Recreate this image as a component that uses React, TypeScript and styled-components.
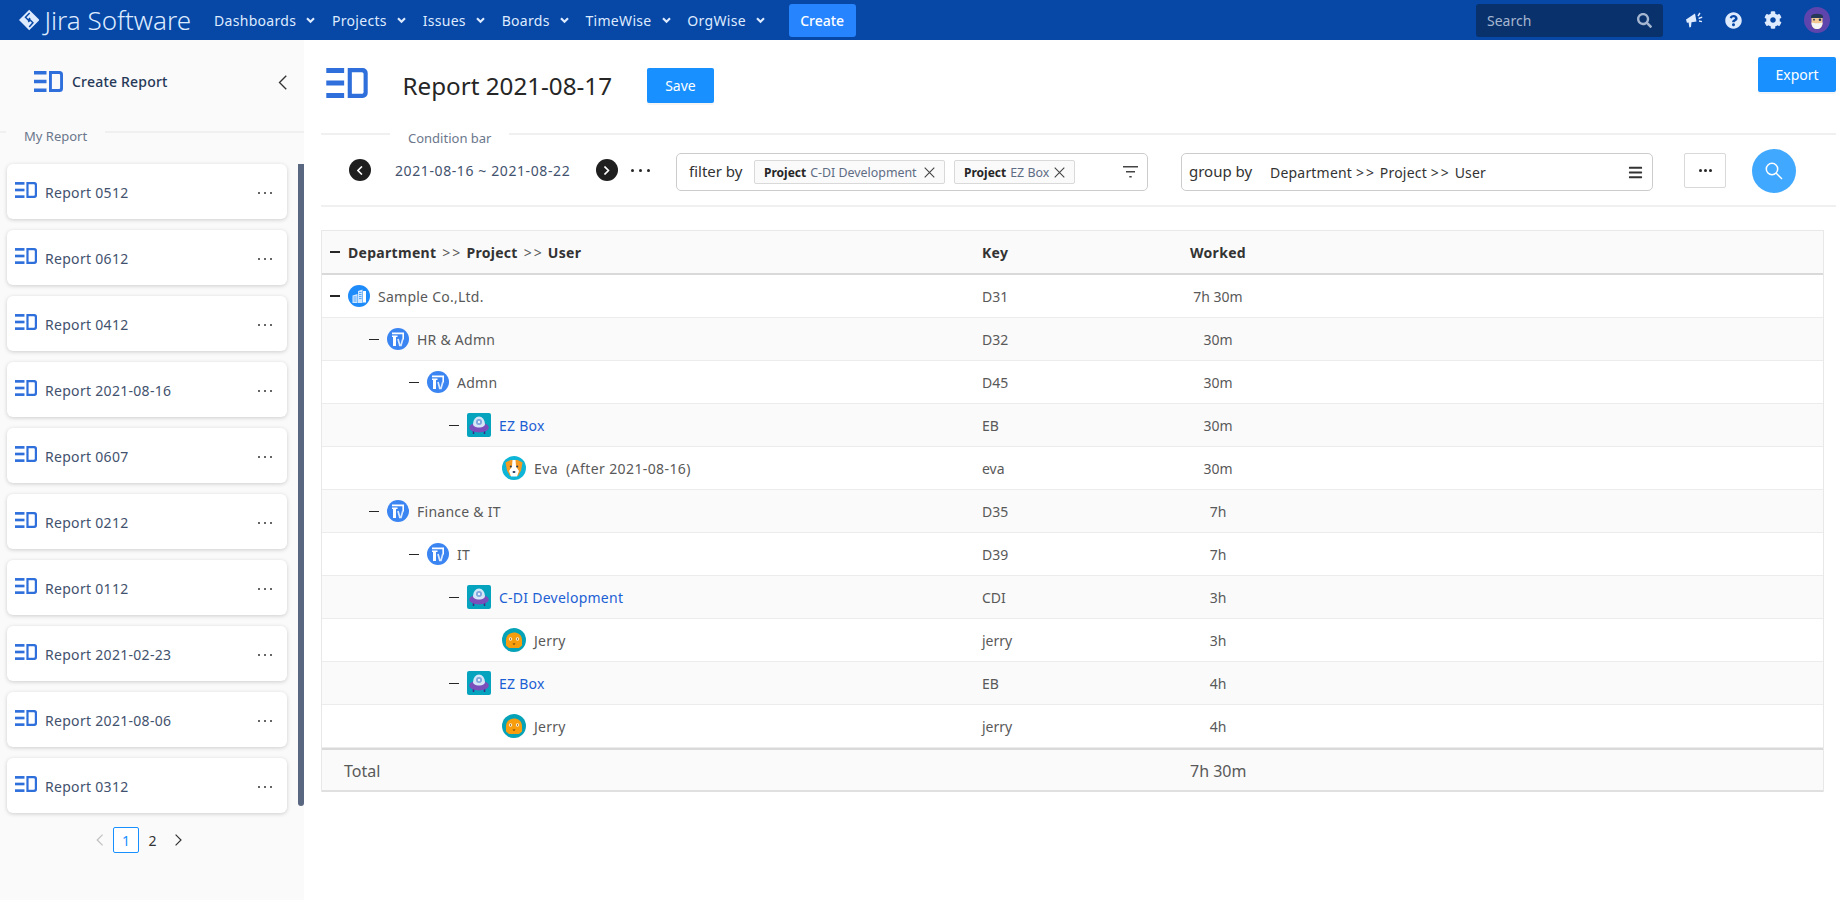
import React from 'react'
import styled, { createGlobalStyle } from 'styled-components'
import { FaBars, FaCog, FaQuestionCircle, FaSearch } from 'react-icons/fa'

const GlobalStyle = createGlobalStyle`
  html, body {
    margin: 0;
    padding: 0;
    background: #fff;
    font-family: "Noto Sans", "Open Sans", sans-serif;
    font-size: 14px;
    color: #595959;
  }
`

const NavBar = styled.header`
  height: 40px;
  background: #0747a6;
  color: #deebff;
  display: flex;
  align-items: center;
  padding-left: 19px;
`

const Brand = styled.div`
  display: flex;
  align-items: center;
  gap: 5px;
  width: 172px;
  margin-right: 23px;
  font-size: 26px;
  font-weight: 300;
  color: #deebff;
  white-space: nowrap;
`

const NavItem = styled.div`
  display: flex;
  align-items: center;
  gap: 10px;
  margin-right: 16.8px;
  letter-spacing: 0.3px;
`

const CreateBtn = styled.button`
  width: 67px;
  height: 33px;
  margin-left: 7px;
  border: 0;
  border-radius: 3px;
  background: #2684ff;
  color: #fff;
  font: 500 14px "Noto Sans", sans-serif;
`

const NavRight = styled.div`
  margin-left: auto;
  display: flex;
  align-items: center;
  padding-right: 10px;
`

const SearchBox = styled.div`
  width: 187px;
  height: 33px;
  box-sizing: border-box;
  background: #09326c;
  border-radius: 3px;
  color: #a5b6d0;
  display: flex;
  align-items: center;
  justify-content: space-between;
  padding: 0 11px;
  margin-right: 23px;
`

const NavIcons = styled.div`
  display: flex;
  align-items: center;
  gap: 22px;
  color: #deebff;
  svg { display: block; }
`

const Layout = styled.div`
  display: flex;
  height: 860px;
`

const Sidebar = styled.aside`
  width: 304px;
  flex: none;
  background: #fafafa;
`

const SideHead = styled.div`
  height: 84px;
  box-sizing: border-box;
  padding: 31px 17px 0 34px;
  display: flex;
  align-items: flex-start;
  color: #253858;
  span {
    margin-left: 9px;
    line-height: 22px;
    font-weight: 500;
    letter-spacing: 0.2px;
  }
  svg:last-child {
    margin-left: auto;
    margin-top: 4px;
  }
`

const Legend = styled.div<{ $lead: number; $gap: number }>`
  height: 16px;
  box-sizing: border-box;
  padding-top: 7px;
  display: flex;
  align-items: center;
  font-size: 13px;
  line-height: 16px;
  color: #6b778c;
  gap: ${p => p.$gap}px;
  &::before, &::after {
    content: '';
    height: 2px;
    margin-top: -7px;
    background: #f0f0f0;
  }
  &::before { width: ${p => p.$lead}px; }
  &::after { flex: 1; }
`

const SideScroll = styled.div`
  display: flex;
  align-items: flex-start;
  margin: 24px 0 0 7px;
`

const ReportList = styled.div`
  width: 280px;
  display: flex;
  flex-direction: column;
  gap: 11px;
`

const ReportCard = styled.div`
  height: 55px;
  box-sizing: border-box;
  padding: 2px 15px 0 8px;
  background: #fff;
  border-radius: 6px;
  box-shadow: 0 1px 4px rgba(0, 0, 0, 0.18);
  display: flex;
  align-items: center;
  gap: 8px;
  color: #42526e;
  letter-spacing: 0.3px;
  line-height: 22px;
  svg:first-child { margin-top: -6px; }
`

const CardName = styled.span`
  margin-top: 1px;
`

const Dots = styled.span`
  margin-left: auto;
  display: flex;
  gap: 4px;
  i {
    width: 2px;
    height: 2px;
    border-radius: 50%;
    background: #333;
  }
`

const Thumb = styled.div`
  width: 6px;
  height: 642px;
  margin-left: 11px;
  background: #5a6781;
  border-radius: 0 0 3px 3px;
`

const Pager = styled.div`
  display: flex;
  align-items: center;
  margin: 14px 0 0 86px;
`

const PageItem = styled.div<{ $active?: boolean }>`
  width: 26.6px;
  height: 26px;
  box-sizing: border-box;
  display: flex;
  align-items: center;
  justify-content: center;
  color: ${p => (p.$active ? '#1890ff' : '#333')};
  border: ${p => (p.$active ? '1px solid #1890ff' : '0')};
  border-radius: 2px;
  background: ${p => (p.$active ? '#fff' : 'transparent')};
`

const Main = styled.main`
  flex: 1;
  min-width: 0;
  padding: 0 4px 0 17px;
`

const TitleRow = styled.div`
  height: 86px;
  box-sizing: border-box;
  padding: 28px 0 0 4px;
  display: flex;
  align-items: flex-start;
`

const Title = styled.h1`
  margin: 0 35px 0 33.500px;
  font-size: 24.2px;
  font-weight: 400;
  line-height: 36px;
  color: #262626;
  white-space: nowrap;
`

const PrimaryBtn = styled.button<{ $w: number; $push?: boolean }>`
  width: ${p => p.$w}px;
  height: 35px;
  flex: none;
  border: 0;
  border-radius: 2px;
  background: #1890ff;
  color: #fff;
  font: 14px "Noto Sans", sans-serif;
  box-shadow: 0 2px 0 rgba(0, 0, 0, 0.04);
  ${p => p.$push && 'margin-left: auto; margin-top: -11px;'}
`

const ConditionRow = styled.div`
  height: 65px;
  box-sizing: border-box;
  padding: 11px 0 0 28px;
  border-bottom: 2px solid #f0f0f0;
  display: flex;
  align-items: flex-start;
`

const DateGroup = styled.div`
  width: 327px;
  height: 34px;
  display: flex;
  align-items: center;
  color: #42526e;
`

const DateLabel = styled.span`
  width: 176px;
  margin: 0 25px 0 24px;
  white-space: nowrap;
  letter-spacing: 0.6px;
`

const RoundNav = styled.div`
  width: 22px;
  height: 22px;
  flex: none;
  border-radius: 50%;
  background: #1f1f1f;
  display: flex;
  align-items: center;
  justify-content: center;
`

const LooseDots = styled(Dots)`
  margin-left: 13px;
  gap: 5px;
  i { width: 3px; height: 3px; background: #262626; }
`

const MoreDots = styled(Dots)`
  margin: 0;
  gap: 2px;
  i { width: 3px; height: 3px; background: #262626; }
`

const FieldBox = styled.div<{ $gap: number; $inset: number; $end: number }>`
  width: 472px;
  height: 38px;
  box-sizing: border-box;
  margin-left: ${p => p.$gap}px;
  padding: 0 ${p => p.$end}px 0 ${p => p.$inset}px;
  border: 1px solid #ccc;
  border-radius: 5px;
  display: flex;
  align-items: center;
  color: #333;
  white-space: nowrap;
  > svg { margin-left: auto; }
`

const FieldLabel = styled.span<{ $w: number }>`
  width: ${p => p.$w}px;
  flex: none;
  margin-top: -2px;
  font-size: 15px;
`

const Chain = styled.span`
  letter-spacing: 0.2px;
  em {
    font-style: normal;
    letter-spacing: 2px;
  }
`

const Tag = styled.span<{ $w: number }>`
  width: ${p => p.$w}px;
  height: 24px;
  box-sizing: border-box;
  flex: none;
  margin-right: 9px;
  padding: 0 9px;
  border: 1px solid #d9d9d9;
  border-radius: 2px;
  background: #fafafa;
  display: flex;
  align-items: center;
  font-size: 12.4px;
  color: #5e6c84;
  b { color: #262626; margin-right: 4px; font-size: 12px; }
  svg { margin-left: auto; }
`

const MoreBtn = styled.div`
  width: 42px;
  height: 35px;
  box-sizing: border-box;
  margin-left: 31px;
  border: 1px solid #d9d9d9;
  border-radius: 2px;
  display: flex;
  align-items: center;
  justify-content: center;
`

const SearchRound = styled.div`
  width: 44px;
  height: 44px;
  margin: -4px 0 0 26px;
  border-radius: 50%;
  background: #40a9ff;
  display: flex;
  align-items: center;
  justify-content: center;
`

const Table = styled.section`
  margin: 23px 12px 0 0;
  border: 1px solid #e8e8e8;
  border-bottom: 0;
`

const Row = styled.div<{ $alt?: boolean }>`
  height: 43px;
  box-sizing: border-box;
  display: grid;
  grid-template-columns: 660px 208px 56px;
  align-items: center;
  background: ${p => (p.$alt ? '#fafafa' : '#fff')};
  border-bottom: 1px solid #ececec;
`

const HeadRow = styled(Row)`
  height: 44px;
  background: #fafafa;
  border-bottom: 2px solid #d9d9d9;
  color: #333;
  font-weight: 700;
  letter-spacing: 0.3px;
  em {
    font-style: normal;
    font-weight: 400;
    color: #595959;
    letter-spacing: 2px;
    margin: 0 4px 0 6px;
  }
`

const TotalRow = styled(Row)`
  height: 44px;
  padding-top: 1px;
  background: #fafafa;
  border-top: 2px solid #d9d9d9;
  border-bottom: 2px solid #e0e0e0;
  font-size: 16px;
  white-space: nowrap;
  > span:first-child { padding-left: 22px; }
`

const TreeCell = styled.div<{ $indent: number }>`
  display: flex;
  align-items: center;
  padding-left: ${p => p.$indent}px;
  white-space: nowrap;
`

const Dash = styled.i<{ $strong?: boolean }>`
  width: 10px;
  height: ${p => (p.$strong ? 2 : 1)}px;
  margin-right: 8px;
  background: #262626;
`

const Label = styled.span<{ $digits?: boolean }>`
  margin-left: 8px;
  white-space: pre;
  letter-spacing: ${p => (p.$digits ? 0.4 : 0.25)}px;
`

const LinkLabel = styled(Label)`
  color: #1c5fd4;
`

const Worked = styled.span`
  text-align: center;
  white-space: nowrap;
`

const DiamondLogo = () => (
  <svg width="22" height="22" viewBox="0 0 22 22">
    <path d="M11 0l11 11-11 11L0 11z" fill="#deebff" />
    <path d="M11.500 3.500L7 8l4 4-1 1M11 18.500L15 14l-4-4 1-1" fill="none" stroke="#0747a6" strokeWidth="1.600" />
  </svg>
)

const Caret = () => (
  <svg width="9" height="7" viewBox="0 0 9 7">
    <path d="M1 1.200l3.500 3.500L8 1.200" fill="none" stroke="#deebff" strokeWidth="2.200" />
  </svg>
)

const Megaphone = () => (
  <svg width="17" height="18" viewBox="0 0 17 18" fill="#deebff">
    <path d="M0 8.500L9 2.500l1.500 8-5 .7L5 16l-1.600.6L2.600 11.600l-1.700.2z" />
    <path d="M12 5l2-3M12.600 7.500l3.600-1.400M13 10l3 .6" stroke="#deebff" strokeWidth="1.400" />
  </svg>
)

const Avatar = () => (
  <svg width="26" height="26" viewBox="0 0 26 26">
    <circle cx="13" cy="13" r="13" fill="#5e45ad" />
    <path d="M7 9c1-3 11-3 12 0v2H7z" fill="#253858" />
    <path d="M7.500 11h11v5c0 4-2.500 6-5.500 6s-5.500-2-5.500-6z" fill="#f4c892" />
    <path d="M7.500 15.500c2 1 9 1 11 0 0 4-2.500 6.500-5.500 6.500s-5.500-2.500-5.500-6.500z" fill="#f4f5f7" />
    <circle cx="16" cy="12.700" r="1.300" fill="#253858" />
    <circle cx="10" cy="12.700" r=".9" fill="#253858" />
  </svg>
)

const ReportIcon = ({ w = 29, h = 21 }: { w?: number; h?: number }) => (
  <svg width={w} height={h} viewBox="0 0 29 21" fill="#2f6fdc">
    <rect x="0" y="0" width="12.500" height="3.500" />
    <rect x="0" y="8.750" width="12.500" height="3.500" />
    <rect x="0" y="17.500" width="12.500" height="3.500" />
    <path d="M15 0h10.500A3.500 3.500 0 0 1 29 3.500v14a3.500 3.500 0 0 1-3.500 3.500H15zm2.900 2.900v15.200h6.900c.8 0 1.300-.5 1.300-1.300V4.200c0-.8-.5-1.300-1.300-1.300z" />
  </svg>
)

const Chevron = ({ left, color = '#333', size = 12, weight = 1 }: { left?: boolean; color?: string; size?: number; weight?: number }) => (
  <svg width={size * 0.6} height={size} viewBox="0 0 6 10">
    <path d={left ? 'M5.500.5L1 5l4.500 4.500' : 'M.5.5L5 5 .5 9.500'} fill="none" stroke={color} strokeWidth={weight} />
  </svg>
)

const CloseX = () => (
  <svg width="11" height="11" viewBox="0 0 11 11">
    <path d="M.7.7l9.600 9.600M10.300.7L.7 10.300" stroke="#444" strokeWidth="1.100" />
  </svg>
)

const FilterIcon = () => (
  <svg width="15" height="12" viewBox="0 0 15 12" fill="#444">
    <rect x="0" y="0" width="15" height="1.500" />
    <rect x="3" y="5" width="9" height="1.500" />
    <rect x="6.300" y="10" width="2.400" height="1.500" />
  </svg>
)

const Magnifier = () => (
  <svg width="18" height="18" viewBox="0 0 18 18" fill="none" stroke="#fff" strokeWidth="1.500">
    <circle cx="7" cy="7" r="5.700" />
    <path d="M11 11l6 6" />
  </svg>
)

const Company = () => (
  <svg width="22" height="22" viewBox="0 0 22 22">
    <circle cx="11" cy="11" r="11" fill="#1e8bfa" />
    <path d="M4.500 10.500l5-1.500v9h-5zM10 6l4.500-1.500V18H10z" fill="#cfe6ff" />
    <path d="M15 6h3v11.500h-3z" fill="#fff" />
    <path d="M5.500 12h3M5.500 14h3M5.500 16h3M11 7.500h2.500M11 9.500h2.500M11 11.500h2.500M11 13.500h2.500" stroke="#1e8bfa" strokeWidth=".7" />
  </svg>
)

const Department = () => (
  <svg width="22" height="22" viewBox="0 0 22 22">
    <circle cx="11" cy="11" r="11" fill="#3b85f2" />
    <path d="M5 4.500h12v7h-1.600V6.200H5z" fill="#fff" />
    <path d="M5 7.500h5.500v1.600H9V18H6V9.100H5z" fill="#fff" />
    <path d="M11 11l1.800 6.500h1.200L15.800 11" fill="none" stroke="#dbeaff" strokeWidth="1.700" />
  </svg>
)

const ProjectIcon = () => (
  <svg width="24" height="24" viewBox="0 0 24 24">
    <rect width="24" height="24" rx="2" fill="#06a3bf" />
    <path d="M6.500 21v-3M17.500 21v-3" stroke="#3b2b86" strokeWidth="1.500" />
    <ellipse cx="12" cy="14.500" rx="9.800" ry="5" fill="#7a4fbc" />
    <path d="M6 11a6 7.500 0 0 1 12 0c0 2-2.500 3.500-6 3.500s-6-1.500-6-3.500z" fill="#d5e6f7" />
    <circle cx="12" cy="9" r="3" fill="#7fa6dc" />
    <circle cx="12" cy="9" r="1.200" fill="#e9f1fb" />
  </svg>
)

const Eva = () => (
  <svg width="24" height="24" viewBox="0 0 24 24">
    <circle cx="12" cy="12" r="12" fill="#0fb5d6" />
    <path d="M3.500 6.500L8.500 4h7l5 2.500-1.500 8-3 5.500H8l-3-5.500z" fill="#f59a23" />
    <path d="M10.500 4h3l.5 6.500 3 4.500-2 5.500H9L7 15l3-4.500z" fill="#fff" />
    <circle cx="8.800" cy="10.500" r="1" fill="#253858" />
    <circle cx="15.200" cy="10.500" r="1" fill="#253858" />
    <ellipse cx="12" cy="16" rx="1.500" ry="1.100" fill="#253858" />
  </svg>
)

const Jerry = () => (
  <svg width="24" height="24" viewBox="0 0 24 24">
    <circle cx="12" cy="12" r="12" fill="#06a3b8" />
    <path d="M4 11.500c.5-4.500 4-7 8-7s7.500 2.500 8 7v6l-3 2.500H7l-3-2.500z" fill="#f79d0e" />
    <circle cx="8.500" cy="11" r="1.700" fill="#fff3d6" />
    <circle cx="15.500" cy="11" r="1.700" fill="#fff3d6" />
    <circle cx="8.500" cy="11" r=".7" fill="#5e3a0a" />
    <circle cx="15.500" cy="11" r=".7" fill="#5e3a0a" />
    <path d="M10.500 15.500h3l-1.500 1.400z" fill="#5e3a0a" />
  </svg>
)

const reports = [
  'Report 0512', 'Report 0612', 'Report 0412', 'Report 2021-08-16', 'Report 0607',
  'Report 0212', 'Report 0112', 'Report 2021-02-23', 'Report 2021-08-06', 'Report 0312'
]

type Kind = 'company' | 'dept' | 'project' | 'eva' | 'jerry'

const rows: { name: string; key: string; worked: string; kind: Kind; indent: number }[] = [
  { name: 'Sample Co.,Ltd.', key: 'D31', worked: '7h 30m', kind: 'company', indent: 8 },
  { name: 'HR & Admn', key: 'D32', worked: '30m', kind: 'dept', indent: 47 },
  { name: 'Admn', key: 'D45', worked: '30m', kind: 'dept', indent: 87 },
  { name: 'EZ Box', key: 'EB', worked: '30m', kind: 'project', indent: 127 },
  { name: 'Eva  (After 2021-08-16)', key: 'eva', worked: '30m', kind: 'eva', indent: 180 },
  { name: 'Finance & IT', key: 'D35', worked: '7h', kind: 'dept', indent: 47 },
  { name: 'IT', key: 'D39', worked: '7h', kind: 'dept', indent: 87 },
  { name: 'C-DI Development', key: 'CDI', worked: '3h', kind: 'project', indent: 127 },
  { name: 'Jerry', key: 'jerry', worked: '3h', kind: 'jerry', indent: 180 },
  { name: 'EZ Box', key: 'EB', worked: '4h', kind: 'project', indent: 127 },
  { name: 'Jerry', key: 'jerry', worked: '4h', kind: 'jerry', indent: 180 }
]

const kindIcon = {
  company: <Company />,
  dept: <Department />,
  project: <ProjectIcon />,
  eva: <Eva />,
  jerry: <Jerry />
}

const threeDots = (
  <>
    <i />
    <i />
    <i />
  </>
)

export default function App() {
  return (
    <>
      <GlobalStyle />
      <NavBar>
        <Brand>
          <DiamondLogo />
          Jira Software
        </Brand>
        {['Dashboards', 'Projects', 'Issues', 'Boards', 'TimeWise', 'OrgWise'].map(item => (
          <NavItem key={item}>
            {item}
            <Caret />
          </NavItem>
        ))}
        <CreateBtn>Create</CreateBtn>
        <NavRight>
          <SearchBox>
            Search
            <FaSearch size={15} />
          </SearchBox>
          <NavIcons>
            <Megaphone />
            <FaQuestionCircle size={17} />
            <FaCog size={18} />
            <Avatar />
          </NavIcons>
        </NavRight>
      </NavBar>
      <Layout>
        <Sidebar>
          <SideHead>
            <ReportIcon />
            <span>Create Report</span>
            <Chevron left size={15} weight={0.9} />
          </SideHead>
          <Legend $lead={6} $gap={18}>My Report</Legend>
          <SideScroll>
            <ReportList>
              {reports.map(name => (
                <ReportCard key={name}>
                  <ReportIcon w={22} h={16} />
                  <CardName>{name}</CardName>
                  <Dots>{threeDots}</Dots>
                </ReportCard>
              ))}
            </ReportList>
            <Thumb />
          </SideScroll>
          <Pager>
            <PageItem><Chevron left color="#bfbfbf" /></PageItem>
            <PageItem $active>1</PageItem>
            <PageItem>2</PageItem>
            <PageItem><Chevron /></PageItem>
          </Pager>
        </Sidebar>
        <Main>
          <TitleRow>
            <ReportIcon w={44} h={30} />
            <Title>Report 2021-08-17</Title>
            <PrimaryBtn $w={67}>Save</PrimaryBtn>
            <PrimaryBtn $w={78} $push>Export</PrimaryBtn>
          </TitleRow>
          <Legend $lead={69} $gap={18}>Condition bar</Legend>
          <ConditionRow>
            <DateGroup>
              <RoundNav><Chevron left color="#fff" size={9} weight={1.8} /></RoundNav>
              <DateLabel>2021-08-16 ~ 2021-08-22</DateLabel>
              <RoundNav><Chevron color="#fff" size={9} weight={1.8} /></RoundNav>
              <LooseDots>{threeDots}</LooseDots>
            </DateGroup>
            <FieldBox $gap={0} $inset={12} $end={9}>
              <FieldLabel $w={65}>filter by</FieldLabel>
              <Tag $w={191}>
                <b>Project</b>C-DI Development
                <CloseX />
              </Tag>
              <Tag $w={121}>
                <b>Project</b>EZ Box
                <CloseX />
              </Tag>
              <FilterIcon />
            </FieldBox>
            <FieldBox $gap={33} $inset={7} $end={9}>
              <FieldLabel $w={81}>group by</FieldLabel>
              <Chain>Department <em>&gt;&gt;</em> Project <em>&gt;&gt;</em> User</Chain>
              <FaBars size={15} />
            </FieldBox>
            <MoreBtn><MoreDots>{threeDots}</MoreDots></MoreBtn>
            <SearchRound><Magnifier /></SearchRound>
          </ConditionRow>
          <Table>
            <HeadRow>
              <TreeCell $indent={8}>
                <Dash $strong />
                Department<em>&gt;&gt;</em>Project<em>&gt;&gt;</em>User
              </TreeCell>
              <span>Key</span>
              <Worked>Worked</Worked>
            </HeadRow>
            {rows.map((row, i) => {
              const Name = row.kind === 'project' ? LinkLabel : Label
              return (
                <Row key={i} $alt={i % 2 === 1}>
                  <TreeCell $indent={row.indent}>
                    {row.indent < 180 && <Dash $strong={row.indent === 8} />}
                    {kindIcon[row.kind]}
                    <Name $digits={row.kind === 'eva'}>{row.name}</Name>
                  </TreeCell>
                  <span>{row.key}</span>
                  <Worked>{row.worked}</Worked>
                </Row>
              )
            })}
            <TotalRow>
              <span>Total</span>
              <span />
              <Worked>7h 30m</Worked>
            </TotalRow>
          </Table>
        </Main>
      </Layout>
    </>
  )
}
